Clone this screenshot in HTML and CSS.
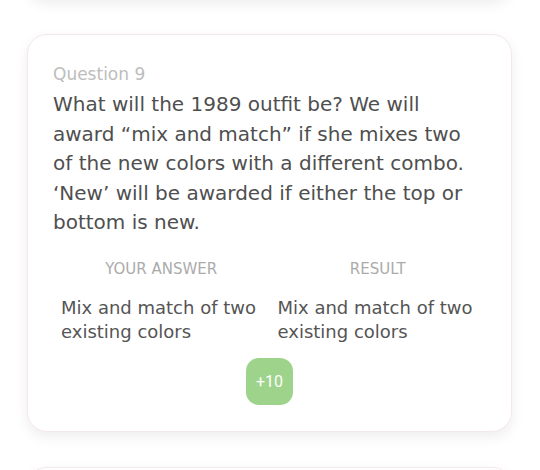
FILE: index.html
```html
<!DOCTYPE html>
<html lang="en">
<head>
    <meta charset="UTF-8">
    <meta name="viewport" content="width=device-width, initial-scale=1.0">
    <title>Quiz Results</title>
    <link rel="stylesheet" href="styles.css">
</head>
<body>
    <div class="feed">
        <div class="card card-stub"></div>
        <div class="card">
            <div class="question-label">Question 9</div>
            <p class="question-text">What will the 1989 outfit be? We will award “mix and match” if she mixes two of the new colors with a different combo. ‘New’ will be awarded if either the top or bottom is new.</p>
            <div class="answer-grid">
                <div class="answer-head">YOUR ANSWER</div>
                <div class="answer-head">RESULT</div>
                <div class="answer-body">Mix and match of two existing colors</div>
                <div class="answer-body">Mix and match of two existing colors</div>
            </div>
            <div class="points">
                <span class="points-badge">+10</span>
            </div>
        </div>
        <div class="card card-stub"></div>
    </div>
</body>
</html>
```

FILE: styles.css
```css
body {
    margin: 0;
    padding: 0;
    background-color: #ffffff;
    font-family: "DejaVu Sans", Inter, sans-serif;
    overflow: hidden;
}
.feed {
    display: flex;
    flex-direction: column;
    gap: 35px;
    margin-top: -61px;
    padding: 0 28px 0 27px;
}
.card {
    background-color: #ffffff;
    border: 1px solid #f5e8eb;
    border-radius: 20px;
    box-shadow: 0 5px 14px rgba(0, 0, 0, 0.07);
    padding: 27px 25px 26px 25px;
}
.card-stub {
    height: 60px;
    padding: 0;
    box-sizing: border-box;
}
.question-label {
    font-size: 17px;
    line-height: 24px;
    color: #bdbdbd;
}
.question-text {
    margin: 4px 0 0 0;
    font-size: 20px;
    line-height: 29.5px;
    color: #4f4f4f;
}
.answer-grid {
    display: grid;
    grid-template-columns: 1fr 1fr;
    margin-top: 21px;
}
.answer-head {
    text-align: center;
    font-size: 15px;
    line-height: 20px;
    color: #ababab;
    margin-bottom: 17px;
}
.answer-body {
    padding-left: 8px;
    font-size: 18px;
    line-height: 24.5px;
    color: #555555;
}
.points {
    display: flex;
    justify-content: center;
    margin-top: 13px;
}
.points-badge {
    display: flex;
    align-items: center;
    justify-content: center;
    width: 47px;
    height: 47px;
    border-radius: 13px;
    background-color: #9dd38a;
    color: #ffffff;
    font-family: Roboto, sans-serif;
    font-size: 16px;
}
```
